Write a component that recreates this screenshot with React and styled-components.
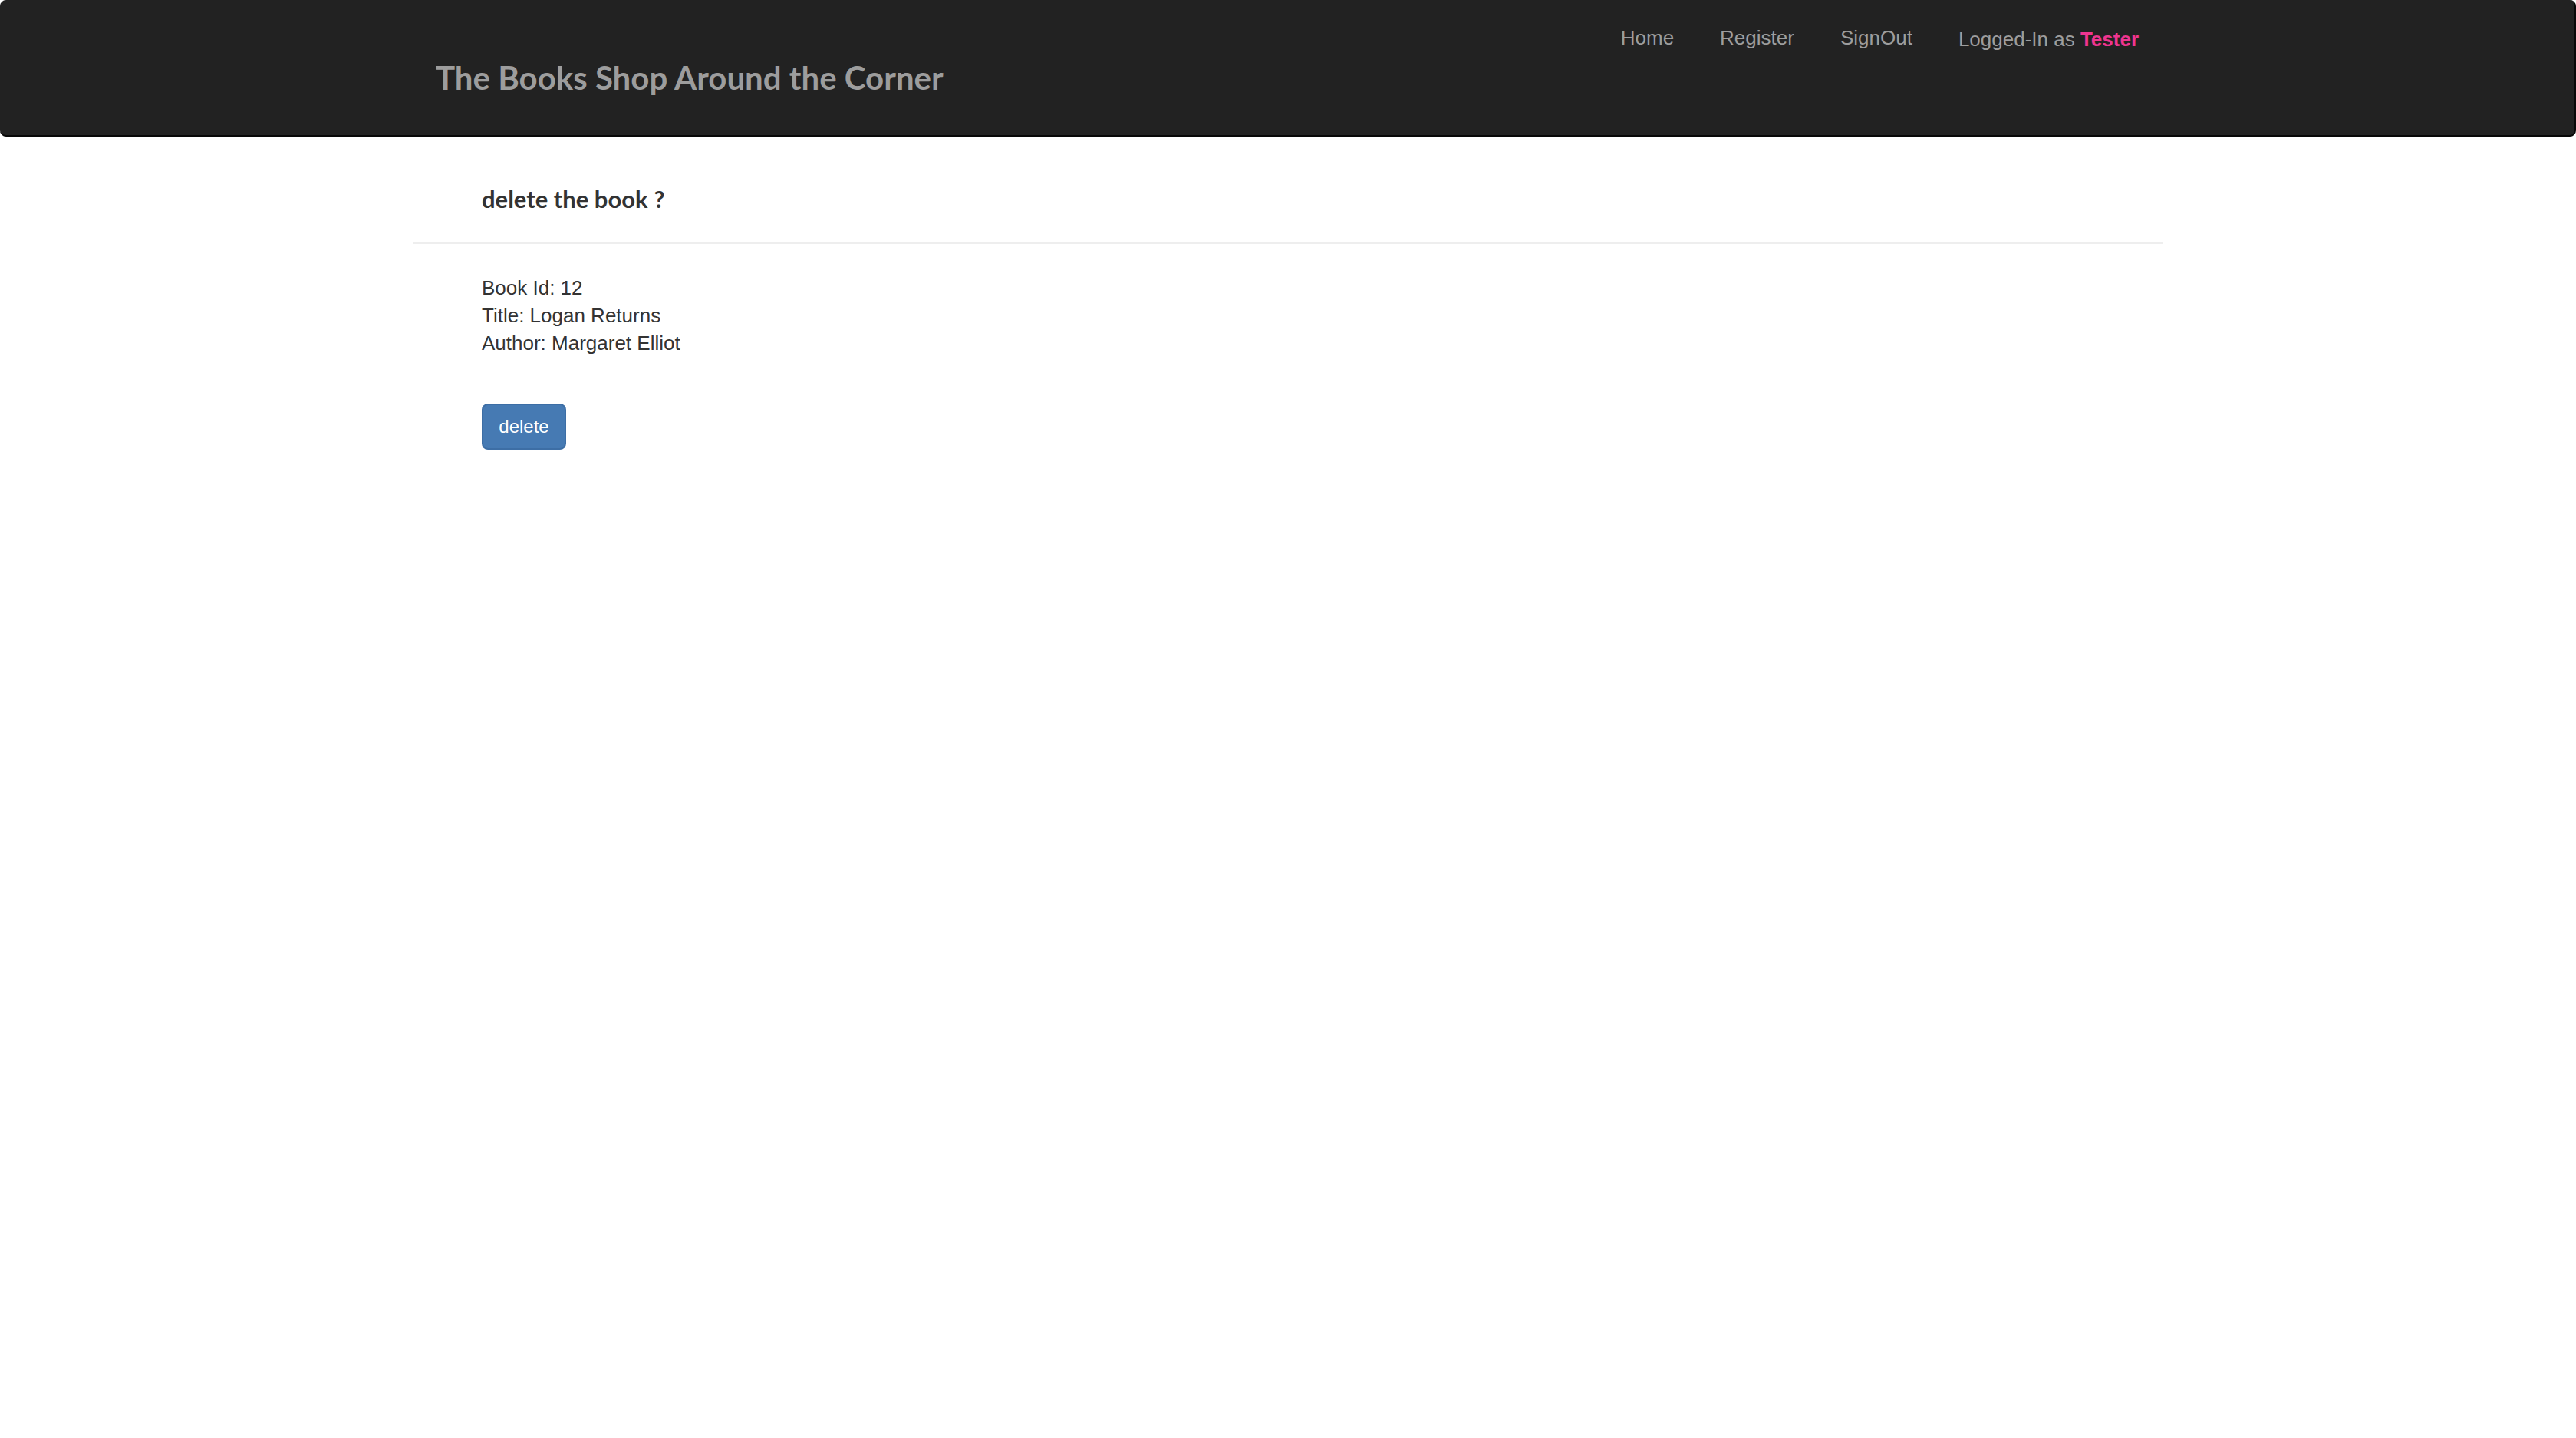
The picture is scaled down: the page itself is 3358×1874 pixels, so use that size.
import React from "react";
import styled, { createGlobalStyle } from "styled-components";

const GlobalStyle = createGlobalStyle`
  * { box-sizing: border-box; }
  body {
    margin: 0;
    background: #fff;
    color: #333;
    font-family: "Helvetica Neue", Helvetica, "Liberation Sans", Arial, sans-serif;
    font-size: 26px;
    line-height: 36px;
  }
`;

const Container = styled.div`
  width: 100%;
  max-width: 2340px;
  margin: 0 auto;
  padding: 0 30px;
`;

const Navbar = styled.header`
  background: #222;
  border: solid #080808;
  border-width: 0 2px 2px 0;
  border-radius: 8px;
  margin-bottom: 40px;
`;

const NavbarRow = styled(Container)`
  display: flex;
  justify-content: space-between;
  align-items: flex-start;
  min-height: 176px;
`;

const Brand = styled.a`
  padding: 70px 30px 0;
  color: #9d9d9d;
  font-family: Lato, sans-serif;
  font-size: 42px;
  font-weight: 700;
  line-height: 62px;
  text-decoration: none;
`;

const Nav = styled.nav`
  display: flex;
  padding-top: 31px;
`;

const NavLink = styled.a`
  padding: 0 30px;
  color: #9d9d9d;
  text-decoration: none;
`;

const NavText = styled.p`
  margin: 2px 0 0;
  padding: 0 30px;
  color: #9d9d9d;
`;

const UserName = styled.strong`
  color: #ee3590;
`;

const Heading = styled.h1`
  margin: 0;
  padding: 20px 89px 36px;
  font-family: Lato, sans-serif;
  font-size: 31px;
  font-weight: 700;
  line-height: 42px;
`;

const Divider = styled.hr`
  margin: 0;
  border: 0;
  border-top: 2px solid #eee;
`;

const Content = styled.form`
  padding: 39px 89px;
`;

const Details = styled.div`
  margin-bottom: 61px;
`;

const Detail = styled.div``;

const DeleteButton = styled.button`
  min-width: 110px;
  height: 60px;
  padding: 0 20px;
  border: 2px solid #3d6ea5;
  border-radius: 8px;
  background: #467ab3;
  color: #fff;
  font-family: inherit;
  font-size: 24px;
  line-height: 36px;
`;

const links = ["Home", "Register", "SignOut"];
const details = [
  ["Book Id", "12"],
  ["Title", "Logan Returns"],
  ["Author", "Margaret Elliot"],
];

export default function App() {
  return (
    <>
      <GlobalStyle />
      <Navbar>
        <NavbarRow>
          <Brand href="#">The Books Shop Around the Corner</Brand>
          <Nav>
            {links.map((label) => (
              <NavLink key={label} href="#">{label}</NavLink>
            ))}
            <NavText>
              Logged-In as <UserName>Tester</UserName>
            </NavText>
          </Nav>
        </NavbarRow>
      </Navbar>
      <Container as="main">
        <Heading>delete the book ?</Heading>
        <Divider />
        <Content onSubmit={(event) => event.preventDefault()}>
          <Details>
            {details.map(([name, value]) => (
              <Detail key={name}>{`${name}: ${value}`}</Detail>
            ))}
          </Details>
          <DeleteButton type="submit">delete</DeleteButton>
        </Content>
      </Container>
    </>
  );
}
